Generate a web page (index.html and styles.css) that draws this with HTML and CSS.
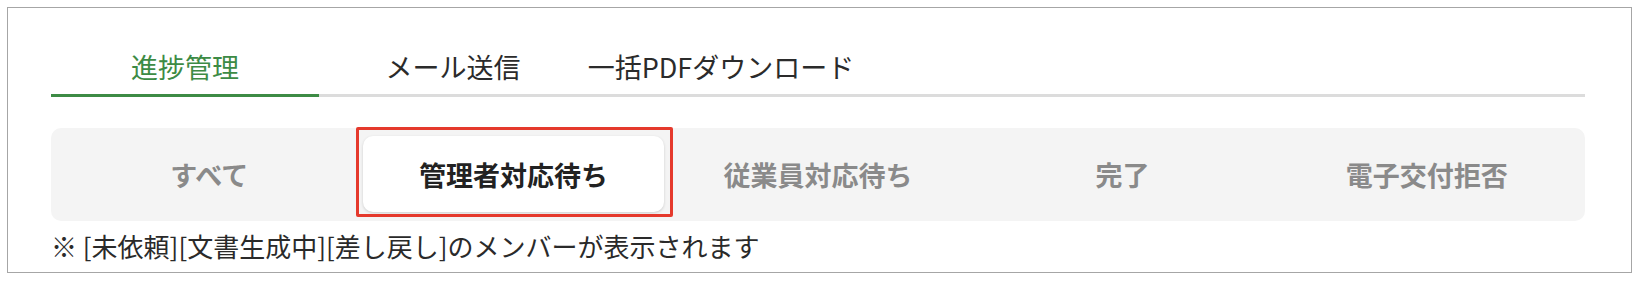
FILE: index.html
```html
<!DOCTYPE html>
<html lang="ja">
<head>
<meta charset="utf-8">
<title>進捗管理</title>
<link rel="stylesheet" href="styles.css">
</head>
<body>
<div class="frame">
  <nav class="tabs">
    <div class="tab tab-active">進捗管理</div>
    <div class="tab">メール送信</div>
    <div class="tab">一括PDFダウンロード</div>
  </nav>
  <div class="segments">
    <div class="seg">すべて</div>
    <div class="seg seg-active">管理者対応待ち<span class="highlight"></span></div>
    <div class="seg">従業員対応待ち</div>
    <div class="seg">完了</div>
    <div class="seg">電子交付拒否</div>
  </div>
  <p class="note">※ [未依頼][文書生成中][差し戻し]のメンバーが表示されます</p>
</div>
</body>
</html>
```
FILE: styles.css
```css
* { box-sizing: border-box; }
html, body { margin: 0; padding: 0; background: #fff; }
body {
  font-family: "Noto Sans CJK JP", "Noto Sans", sans-serif;
  color: #333;
}
.frame {
  margin: 7px 0 0 7px;
  width: 1625px;
  border: 1.5px solid #a6a6a6;
  padding: 30px 46px 11px 43px;
}
.tabs {
  display: flex;
  border-bottom: 3px solid #dcdcdc;
}
.tab {
  width: 268px;
  height: 56px;
  display: flex;
  align-items: center;
  justify-content: center;
  font-size: 27px;
  font-weight: 400;
  color: #2b2b2b;
}
.tab-active {
  color: #3d8b45;
  height: 59px;
  margin-bottom: -3px;
  border-bottom: 3px solid #3d8b45;
}
.segments {
  margin-top: 31px;
  background: #f4f4f4;
  border-radius: 10px;
  padding: 8px 8px 9px;
  display: grid;
  grid-template-columns: repeat(5, 1fr);
  gap: 4px;
}
.seg {
  position: relative;
  height: 76px;
  display: flex;
  align-items: center;
  justify-content: center;
  font-size: 27px;
  font-weight: 700;
  color: #8a8a8a;
  border-radius: 10px;
}
.seg-active {
  background: #fff;
  color: #222;
  box-shadow: 0 1px 3px rgba(0, 0, 0, 0.16);
}
.highlight {
  position: absolute;
  left: -7px;
  right: -9px;
  top: -9px;
  bottom: -5px;
  border: 3.5px solid #e5392c;
  border-radius: 2px;
  pointer-events: none;
}
.note {
  margin: 10px 0 0;
  height: 30px;
  line-height: 30px;
  font-size: 26px;
  color: #2a2a2a;
}
```
